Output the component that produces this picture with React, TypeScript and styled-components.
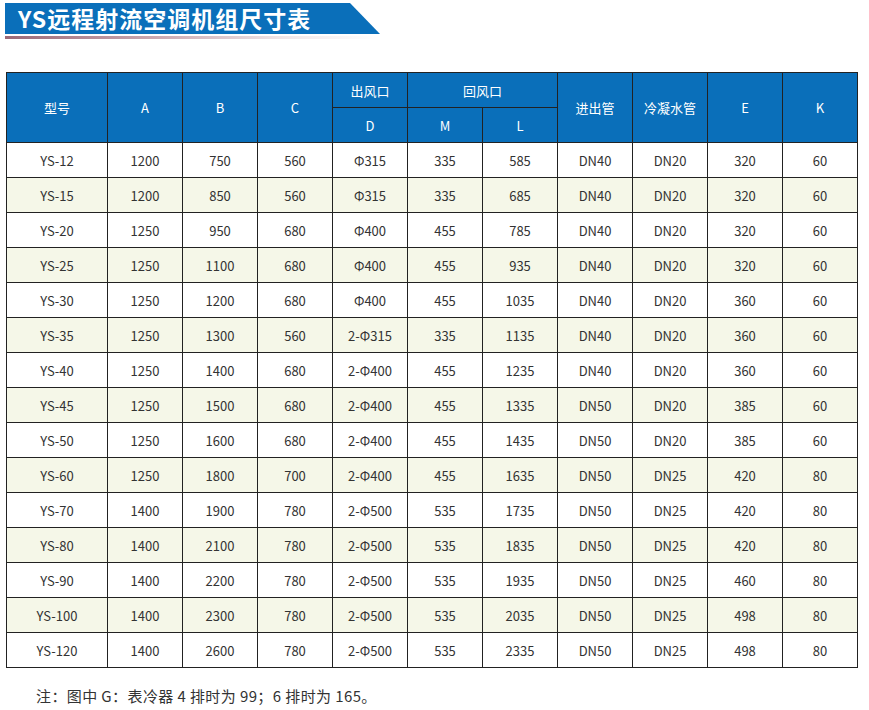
import React from "react";
import styled, { createGlobalStyle } from "styled-components";

const Global = createGlobalStyle`
  html, body { margin: 0; padding: 0; background: #fff; }
  body { font-family: "Noto Sans CJK SC", "Noto Sans", sans-serif; color: #333; }
`;

const Page = styled.div`
  width: 869px;
  padding: 3px 0 0 5px;
  box-sizing: border-box;
  display: flex;
  flex-direction: column;
  & > * { flex-shrink: 0; }
`;

const Banner = styled.div`
  width: 375px;
  height: 31px;
  background: #0a6fba;
  clip-path: polygon(0 0, 345px 0, 100% 100%, 0 100%);
  display: flex;
  align-items: center;
  padding-left: 13px;
  box-sizing: border-box;
`;

const BannerTitle = styled.h1`
  margin: 0;
  color: #fff;
  font-family: "Noto Sans CJK SC", sans-serif;
  font-weight: 700;
  font-size: 23px;
  letter-spacing: 1px;
  line-height: 31px;
`;

const Underline = styled.div`
  width: 372px;
  height: 3px;
  margin-top: 2px;
  background: linear-gradient(to right, #9a6877 0%, #c9a7b0 40%, #efe6e8 75%, #ffffff 100%);
`;

const Table = styled.table`
  margin-top: 33px;
  margin-left: 1px;
  border-collapse: collapse;
  table-layout: fixed;
  width: 852px;
  border: 1.5px solid #2a2a2a;
  font-family: "Noto Sans CJK SC", sans-serif;
  font-size: 13px;
`;

const Th = styled.th`
  background: #0a6fba;
  color: #fff;
  font-weight: 400;
  border: 1px solid #222;
  height: 35px;
  padding: 0;
  text-align: center;
  vertical-align: middle;
  box-sizing: border-box;
`;

const Tr = styled.tr<{ $alt: boolean }>`
  background: ${(p) => (p.$alt ? "#f5f7e8" : "#ffffff")};
`;

const Td = styled.td`
  border: 1px solid #222;
  height: 35px;
  padding: 1px 0 0;
  text-align: center;
  vertical-align: middle;
  color: #333;
  box-sizing: border-box;
  line-height: 16px;
`;

const Note = styled.p`
  margin: 18px 0 0 31px;
  font-size: 15px;
  letter-spacing: 0.4px;
  line-height: 20px;
  color: #333;
  font-family: "Noto Sans CJK SC", sans-serif;
`;

const rows: string[][] = [
  ["YS-12", "1200", "750", "560", "Φ315", "335", "585", "DN40", "DN20", "320", "60"],
  ["YS-15", "1200", "850", "560", "Φ315", "335", "685", "DN40", "DN20", "320", "60"],
  ["YS-20", "1250", "950", "680", "Φ400", "455", "785", "DN40", "DN20", "320", "60"],
  ["YS-25", "1250", "1100", "680", "Φ400", "455", "935", "DN40", "DN20", "320", "60"],
  ["YS-30", "1250", "1200", "680", "Φ400", "455", "1035", "DN40", "DN20", "360", "60"],
  ["YS-35", "1250", "1300", "560", "2-Φ315", "335", "1135", "DN40", "DN20", "360", "60"],
  ["YS-40", "1250", "1400", "680", "2-Φ400", "455", "1235", "DN40", "DN20", "360", "60"],
  ["YS-45", "1250", "1500", "680", "2-Φ400", "455", "1335", "DN50", "DN20", "385", "60"],
  ["YS-50", "1250", "1600", "680", "2-Φ400", "455", "1435", "DN50", "DN20", "385", "60"],
  ["YS-60", "1250", "1800", "700", "2-Φ400", "455", "1635", "DN50", "DN25", "420", "80"],
  ["YS-70", "1400", "1900", "780", "2-Φ500", "535", "1735", "DN50", "DN25", "420", "80"],
  ["YS-80", "1400", "2100", "780", "2-Φ500", "535", "1835", "DN50", "DN25", "420", "80"],
  ["YS-90", "1400", "2200", "780", "2-Φ500", "535", "1935", "DN50", "DN25", "460", "80"],
  ["YS-100", "1400", "2300", "780", "2-Φ500", "535", "2035", "DN50", "DN25", "498", "80"],
  ["YS-120", "1400", "2600", "780", "2-Φ500", "535", "2335", "DN50", "DN25", "498", "80"],
];

export default function App() {
  return (
    <Page>
      <Global />
      <Banner>
        <BannerTitle>YS远程射流空调机组尺寸表</BannerTitle>
      </Banner>
      <Underline />
      <Table>
        <colgroup>
          <col style={{ width: 101 }} />
          {Array.from({ length: 10 }).map((_, i) => (
            <col key={i} style={{ width: 75 }} />
          ))}
        </colgroup>
        <thead>
          <tr>
            <Th rowSpan={2}>型号</Th>
            <Th rowSpan={2}>A</Th>
            <Th rowSpan={2}>B</Th>
            <Th rowSpan={2}>C</Th>
            <Th>出风口</Th>
            <Th colSpan={2}>回风口</Th>
            <Th rowSpan={2}>进出管</Th>
            <Th rowSpan={2}>冷凝水管</Th>
            <Th rowSpan={2}>E</Th>
            <Th rowSpan={2}>K</Th>
          </tr>
          <tr>
            <Th>D</Th>
            <Th>M</Th>
            <Th>L</Th>
          </tr>
        </thead>
        <tbody>
          {rows.map((r, i) => (
            <Tr key={r[0]} $alt={i % 2 === 1}>
              {r.map((c, j) => (
                <Td key={j}>{c}</Td>
              ))}
            </Tr>
          ))}
        </tbody>
      </Table>
      <Note>注：图中 G：表冷器 4 排时为 99；6 排时为 165。</Note>
    </Page>
  );
}
